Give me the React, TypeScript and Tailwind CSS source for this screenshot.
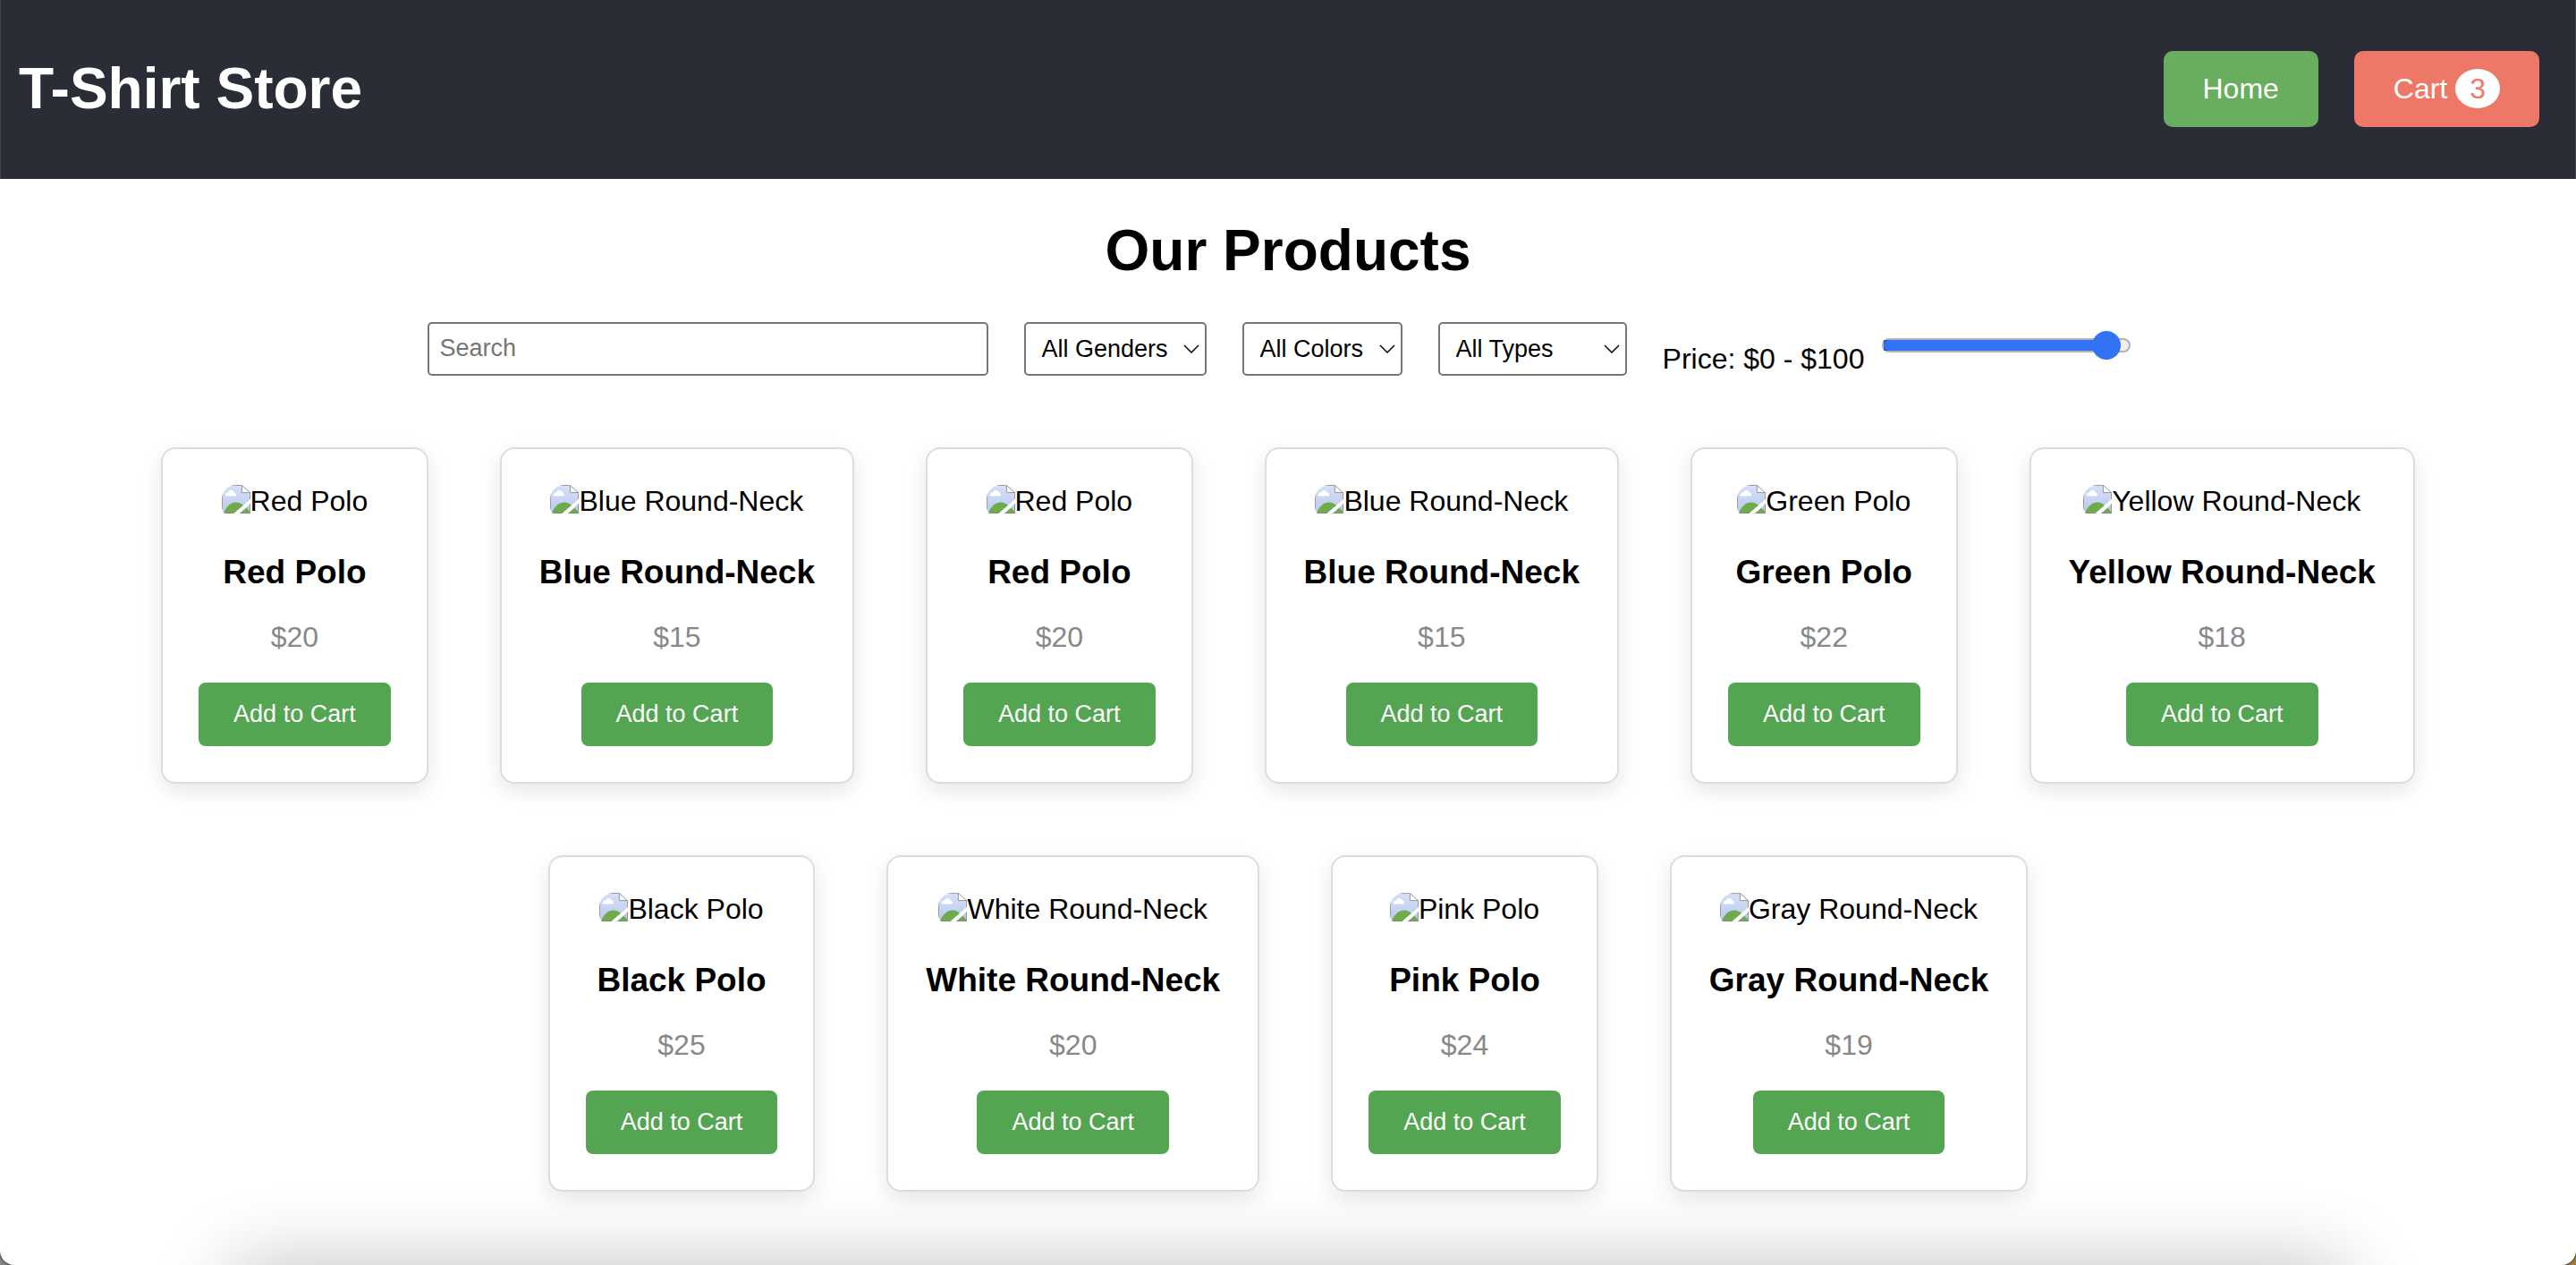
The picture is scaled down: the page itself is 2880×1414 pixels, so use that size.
import { useState } from "react";

const products = [
  ["Red Polo", 20],
  ["Blue Round-Neck", 15],
  ["Red Polo", 20],
  ["Blue Round-Neck", 15],
  ["Green Polo", 22],
  ["Yellow Round-Neck", 18],
  ["Black Polo", 25],
  ["White Round-Neck", 20],
  ["Pink Polo", 24],
  ["Gray Round-Neck", 19],
] as const;

function MissingImage() {
  return (
    <svg viewBox="0 0 16 16" className="h-8 w-8 shrink-0 rounded-tl-2xl rounded-bl-[4px_9px]" aria-hidden="true">
      <defs>
        <linearGradient id="sky" x1="0" y1="0" x2="0" y2="1">
          <stop offset="0" stopColor="#d6e0f8" />
          <stop offset="1" stopColor="#b9c9ee" />
        </linearGradient>
      </defs>
      <path d="M0 0H11.2L16 4.4V8L6.6 16H0Z" fill="url(#sky)" />
      <path d="M16 10.4V16H10Z" fill="#b9c9ee" />
      <path d="M2 6.3C1.5 5 2.6 4.2 3.5 4.3C4 2.6 6.8 2.7 7 4.3C8 4.6 8.2 5.6 7.8 6.3Z" fill="#fff" />
      <path d="M0.8 16C2.5 12 5 9.8 8 9.8C9.6 9.8 10.9 10.5 12 11.4L6.6 16Z" fill="#6fab4b" />
      <path d="M10 16L13.6 12.9C14.6 13.6 15.4 14.6 16 16Z" fill="#6fab4b" />
      <path d="M11.2 0.3V4.3H15.8Z" fill="#fff" stroke="#999" strokeWidth="0.5" />
      <path d="M0.2 16V0.2H11.2M15.8 4.3V8M15.8 10.6V15.8H10.2M6.8 15.8H0" fill="none" stroke="#858585" strokeWidth="0.4" />
    </svg>
  );
}

function Filter({ label, options, width }: { label: string; options: string[]; width: string }) {
  return (
    <div className={`grid ${width}`}>
      <select
        aria-label={label}
        className="col-start-1 row-start-1 h-15 w-full appearance-none rounded-[5px] border-2 border-[#767676] bg-white pl-[18px] text-[27px] leading-8 text-black"
      >
        {options.map((o) => (
          <option key={o}>{o}</option>
        ))}
      </select>
      <svg
        viewBox="0 0 18 10"
        aria-hidden="true"
        className="pointer-events-none col-start-1 row-start-1 mr-2 h-[10px] w-[18px] self-center justify-self-end"
      >
        <path d="M1 1L9 9L17 1" fill="none" stroke="#111" strokeWidth="1.6" />
      </svg>
    </div>
  );
}

export default function App() {
  const [price, setPrice] = useState(100);
  const [cart, setCart] = useState(3);
  return (
    <div className="bg-linear-to-r from-[#858585] to-[#a17c3c]">
      <div className="relative min-h-screen overflow-hidden rounded-b-2xl bg-white font-['Liberation_Sans',Arial,sans-serif] text-[32px] leading-9 text-black shadow-[0_0_3px_#000]">
        <header className="flex h-50 items-center justify-between border-x border-[#3f424a] bg-[#2a2d35] pr-10 pb-0.5 pl-5 text-white">
          <h1 className="text-[64px] leading-[74px] font-bold">T-Shirt Store</h1>
          <nav className="flex items-center gap-10">
            <a href="#home" className="rounded-[10px] bg-[#69ae5e] px-11 py-6 leading-[37px]">
              Home
            </a>
            <a href="#cart" className="rounded-[10px] bg-[#ee7868] px-11 py-6 leading-[37px]">
              Cart <span className="rounded-[50%] bg-white px-4 py-1 text-[#ee7868]">{cart}</span>
            </a>
          </nav>
        </header>

        <main>
          <h2 className="mt-[43px] text-center text-[64px] leading-[74px] font-bold">Our Products</h2>

          <form className="mt-[43px] flex flex-wrap items-start justify-center gap-10" onSubmit={(e) => e.preventDefault()}>
            <input
              type="text"
              aria-label="Search"
              placeholder="Search"
              className="h-15 w-[627px] max-w-full rounded-[5px] border-2 border-[#767676] px-3 pb-0.5 text-[27px] leading-8 placeholder:text-[#757575]"
            />
            <Filter label="Gender" width="w-[204px]" options={["All Genders", "Men", "Women"]} />
            <Filter label="Color" width="w-[179px]" options={["All Colors", "Red", "Blue", "Green"]} />
            <Filter label="Type" width="w-[211px]" options={["All Types", "Polo", "Round-Neck"]} />
            <div className="flex h-15 items-start pr-5">
              <label htmlFor="price" className="mt-[23px] mr-5">
                Price: $0 - $100
              </label>
              <input
                id="price"
                type="range"
                min={0}
                max={104}
                value={price}
                onChange={(e) => setPrice(Number(e.target.value))}
                style={{ backgroundSize: `${(price / 104) * 100}% 100%` }}
                className="mt-[18px] h-4 w-[278px] appearance-none rounded-full border-2 border-[#00000040] bg-[#efefef] bg-[linear-gradient(#3273f6,#3273f6)] bg-no-repeat [&::-webkit-slider-thumb]:size-8 [&::-webkit-slider-thumb]:appearance-none [&::-webkit-slider-thumb]:rounded-full [&::-webkit-slider-thumb]:bg-[#3273f6]"
              />
            </div>
          </form>

          <section className="mt-20 flex flex-wrap justify-center gap-20 px-20 pb-20">
            {products.map(([name, cost], i) => (
              <article
                key={i}
                className="flex flex-col items-center rounded-2xl border-2 border-[#ddd] bg-white p-10 shadow-[0_8px_24px_rgba(0,0,0,0.1)]"
              >
                <div className="flex h-9 items-start">
                  <MissingImage />
                  <span>{name}</span>
                </div>
                <h3 className="mt-10 px-0.5 text-[37px] leading-11 font-bold">{name}</h3>
                <p className="mt-8 text-[#888]">${cost}</p>
                <button
                  type="button"
                  onClick={() => setCart(cart + 1)}
                  className="mt-[33px] rounded-lg bg-[#54a551] px-[39px] py-5 text-[27px] leading-[31px] text-white"
                >
                  Add to Cart
                </button>
              </article>
            ))}
          </section>
        </main>

        <div className="pointer-events-none absolute inset-x-[262px] top-full h-60 shadow-[0_0_84px_rgba(0,0,0,0.25)]" />
      </div>
    </div>
  );
}
